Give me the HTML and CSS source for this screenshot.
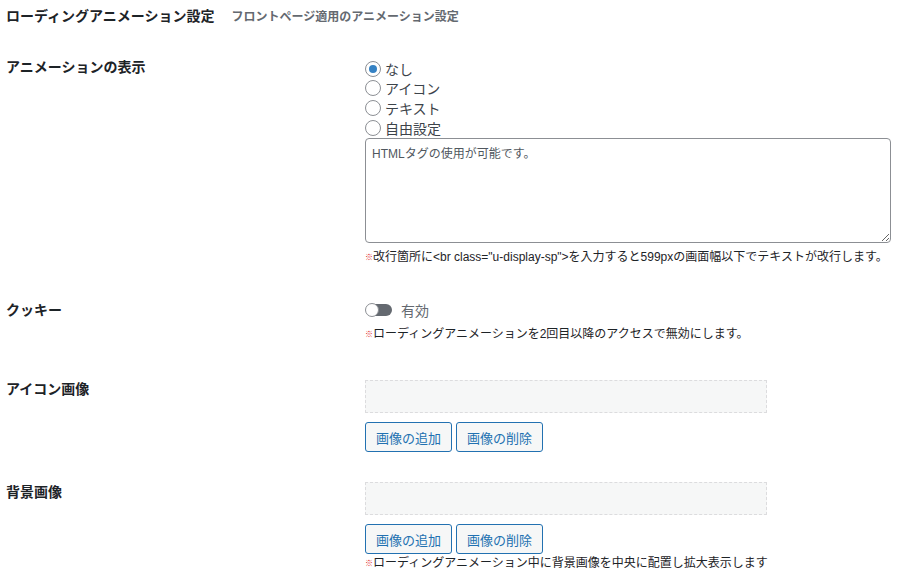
FILE: index.html
```html
<!DOCTYPE html>
<html>
<head>
    <meta charset="utf-8">
    <title>ローディングアニメーション設定</title>
    <link rel="stylesheet" href="styles.css">
</head>
<body>
    <div class="settings">
        <h2 class="settings-title">ローディングアニメーション設定<span class="settings-sub">フロントページ適用のアニメーション設定</span></h2>

        <!-- animation type -->
        <div class="row row-anim">
            <div class="row-label">アニメーションの表示</div>
            <div class="row-field">
                <label class="radio"><input type="radio" name="anim" checked><span>なし</span></label>
                <label class="radio"><input type="radio" name="anim"><span>アイコン</span></label>
                <label class="radio"><input type="radio" name="anim"><span>テキスト</span></label>
                <label class="radio"><input type="radio" name="anim"><span>自由設定</span></label>
                <textarea class="free-text" placeholder="HTMLタグの使用が可能です。"></textarea>
                <p class="note"><span class="mark">※</span>改行箇所に&lt;br class="u-display-sp"&gt;を入力すると599pxの画面幅以下でテキストが改行します。</p>
            </div>
        </div>

        <!-- cookie -->
        <div class="row row-cookie">
            <div class="row-label">クッキー</div>
            <div class="row-field">
                <label class="toggle"><span class="toggle-track"><span class="toggle-knob"></span></span><span>有効</span></label>
                <p class="note"><span class="mark">※</span>ローディングアニメーションを2回目以降のアクセスで無効にします。</p>
            </div>
        </div>

        <!-- icon image -->
        <div class="row row-icon">
            <div class="row-label">アイコン画像</div>
            <div class="row-field">
                <div class="image-box"></div>
                <div class="buttons">
                    <button type="button" class="btn">画像の追加</button>
                    <button type="button" class="btn">画像の削除</button>
                </div>
            </div>
        </div>

        <!-- background image -->
        <div class="row row-bg">
            <div class="row-label">背景画像</div>
            <div class="row-field">
                <div class="image-box"></div>
                <div class="buttons">
                    <button type="button" class="btn">画像の追加</button>
                    <button type="button" class="btn">画像の削除</button>
                </div>
                <p class="note note-tight"><span class="mark">※</span>ローディングアニメーション中に背景画像を中央に配置し拡大表示します</p>
            </div>
        </div>
    </div>
</body>
</html>
```

FILE: styles.css
```css
body {
    margin: 0;
    background-color: #ffffff;
    color: #1d2327;
    font-family: "Liberation Sans", "Noto Sans CJK JP", sans-serif;
    font-size: 14px;
}

.settings {
    padding: 6px 0 0 6px;
}

.settings-title {
    margin: 0;
    font-size: 14px;
    font-weight: bold;
    line-height: 20px;
}

.settings-sub {
    margin-left: 17px;
    font-size: 12px;
    font-weight: bold;
    color: #646970;
}

/* rows of the form */
.row {
    display: grid;
    grid-template-columns: 359px 1fr;
}

.row-label {
    padding-top: 18px;
    font-weight: bold;
    line-height: 20px;
}

.row-field {
    padding-top: 19px;
}

.row-anim {
    padding-top: 12px;
    padding-bottom: 15px;
}

.row-anim .row-field {
    padding-top: 20px;
}

.row-anim .note {
    margin-top: 5px;
}

.row-cookie {
    padding-bottom: 17px;
}

.row-cookie .row-field {
    padding-top: 18px;
}

.row-cookie .note {
    margin-top: 6px;
}

.row-icon {
    padding-bottom: 12px;
}

.row-bg .row-field {
    padding-top: 18px;
}

/* radios */
.radio {
    display: flex;
    align-items: center;
    height: 19.6px;
    color: #3c434a;
}

.radio input {
    appearance: none;
    width: 16px;
    height: 16px;
    margin: 0 4px 0 0;
    border: 1px solid #8c8f94;
    border-radius: 50%;
    background-color: #ffffff;
    display: flex;
    align-items: center;
    justify-content: center;
}

.radio input:checked::before {
    content: "";
    width: 8px;
    height: 8px;
    border-radius: 50%;
    background-color: #3582c4;
}

.free-text {
    display: block;
    box-sizing: border-box;
    width: 526px;
    height: 105px;
    margin: 1px 0 0;
    padding: 5px 6px;
    border: 1px solid #8c8f94;
    border-radius: 4px;
    font-family: inherit;
    font-size: 12px;
    color: #2c3338;
}

.free-text::placeholder {
    color: #50575e;
    opacity: 1;
}

.note {
    margin: 4px 0 0;
    font-size: 12px;
    line-height: 18px;
    color: #1d2327;
}

.note-tight {
    margin-top: 1px;
    line-height: 16px;
}

.mark {
    display: inline-block;
    width: 8px;
    font-size: 8px;
    font-weight: bold;
    color: #e02424;
    vertical-align: 1px;
}

/* toggle */
.toggle {
    display: flex;
    align-items: center;
    height: 19px;
    color: #646970;
}

.toggle-track {
    position: relative;
    width: 26px;
    height: 12px;
    margin: 0 9px 0 1px;
    border-radius: 6px;
    background-color: #646970;
}

.toggle-knob {
    position: absolute;
    left: -1px;
    top: -1px;
    width: 12px;
    height: 12px;
    border: 1px solid #8c8f94;
    border-radius: 50%;
    background-color: #ffffff;
}

/* image selectors */
.image-box {
    box-sizing: border-box;
    width: 402px;
    height: 33px;
    border: 1px dashed #dcdcde;
    background-color: #f6f7f7;
}

.buttons {
    display: flex;
    gap: 4px;
    margin-top: 9px;
}

.btn {
    box-sizing: border-box;
    height: 30px;
    padding: 0 10px;
    border: 1px solid #2271b1;
    border-radius: 3px;
    background-color: #f6f7f7;
    color: #2271b1;
    font-family: inherit;
    font-size: 13px;
    cursor: pointer;
}
```
